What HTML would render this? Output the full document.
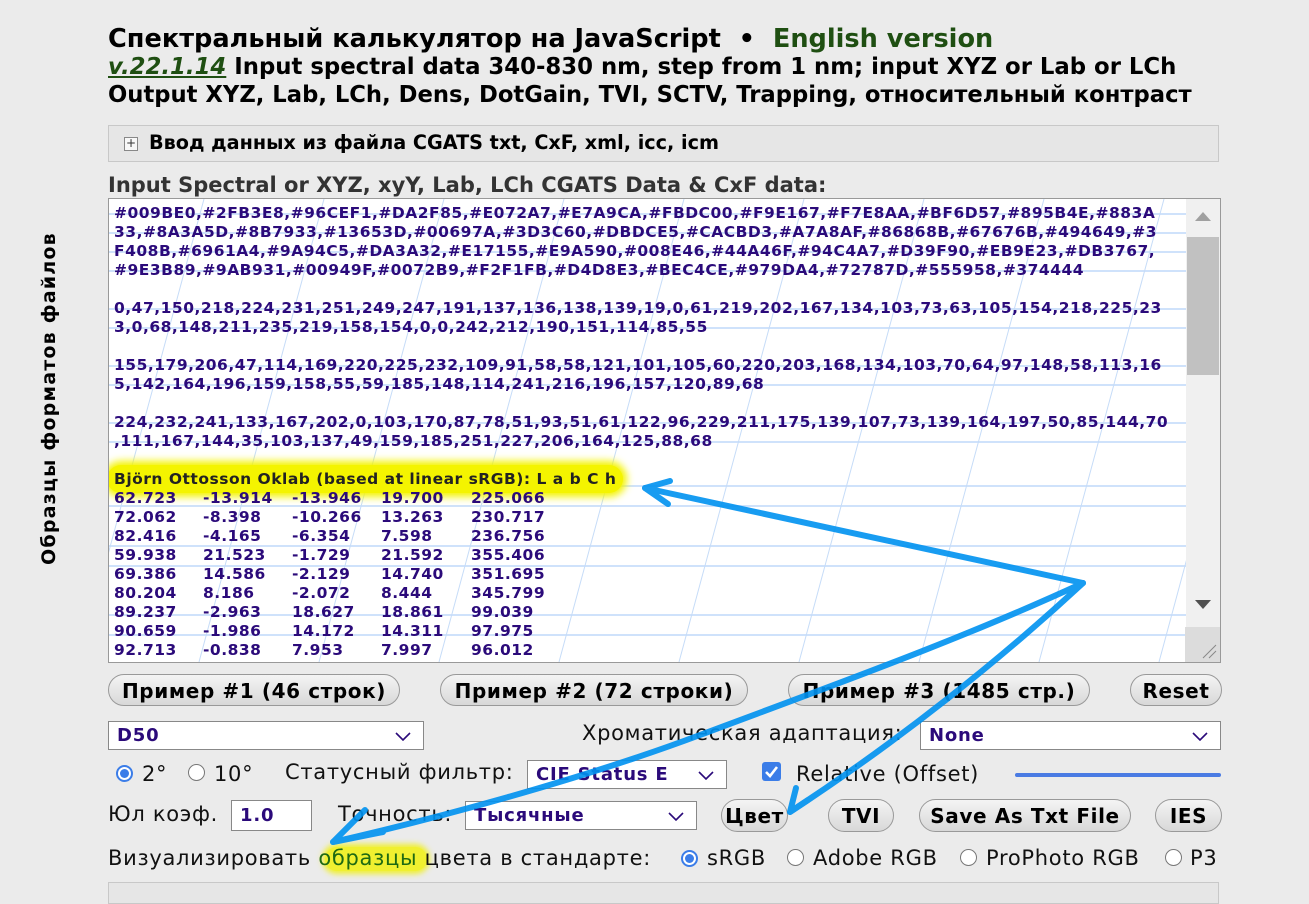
<!DOCTYPE html>
<html><head><meta charset="utf-8">
<style>
html,body{margin:0;padding:0;}
body{width:1309px;height:890px;background:#ebebeb;position:relative;overflow:hidden;font-family:"DejaVu Sans","Liberation Sans",sans-serif;color:#000;}
.a{position:absolute;white-space:nowrap;}
.b{font-weight:bold;}
.ta{position:absolute;left:108px;top:198px;width:1111px;height:463px;background:#fff;border:1px solid #999;overflow:hidden;}
.tl{position:absolute;left:5px;font-size:15.5px;font-weight:bold;color:#2b0a7a;white-space:pre;letter-spacing:0.5px;}
.c{position:absolute;font-size:15.5px;font-weight:bold;color:#2b0a7a;white-space:pre;letter-spacing:0.5px;line-height:19px;}
.btn{position:absolute;height:32px;border:1px solid #999;border-radius:17px;background:linear-gradient(#f4f4f4,#d8d8d8);font-weight:bold;font-size:20px;letter-spacing:0.6px;text-align:center;line-height:32px;box-sizing:border-box;white-space:nowrap;}
.sel{position:absolute;background:#fff;border:1px solid #888;box-sizing:border-box;font-weight:bold;color:#2b0a7a;font-size:18px;letter-spacing:0.8px;padding-left:8px;}
.sel svg{position:absolute;right:12px;top:50%;margin-top:-4px;}
.lbl{position:absolute;font-size:21px;letter-spacing:0.7px;color:#111;white-space:nowrap;}
.rad{position:absolute;width:17px;height:17px;border-radius:50%;border:1px solid #777;background:#fff;box-sizing:border-box;}
.rad.on{border:2px solid #3b7de8;}
.rad.on::after{content:"";position:absolute;left:2px;top:2px;width:9px;height:9px;border-radius:50%;background:#3b7de8;}
</style></head><body>

<div class="a b" style="left:108px;top:24px;font-size:25.6px;">Спектральный калькулятор на JavaScript &nbsp;•&nbsp; <span style="color:#1f4f12">English version</span></div>
<div class="a b" style="left:108px;top:54px;font-size:22.8px;"><span style="color:#1f4f12;font-style:italic;text-decoration:underline">v.22.1.14</span> Input spectral data 340-830 nm, step from 1 nm; input XYZ or Lab or LCh</div>
<div class="a b" style="left:108px;top:82px;font-size:22.7px;">Output XYZ, Lab, LCh, Dens, DotGain, TVI, SCTV, Trapping, относительный контраст</div>

<div class="a" style="left:108px;top:125px;width:1109px;height:35px;border:1px solid #c8c8c8;background:#e6e6e6;"></div>
<div class="a" style="left:124px;top:137px;width:12px;height:12px;border:1px solid #888;background:#f8f8f8;font-size:12px;line-height:11px;text-align:center;color:#333;">+</div>
<div class="a b" style="left:149px;top:131px;font-size:19.2px;">Ввод данных из файла CGATS txt, CxF, xml, icc, icm</div>

<div class="a b" style="left:108px;top:173px;font-size:21px;color:#333;">Input Spectral or XYZ, xyY, Lab, LCh CGATS Data &amp; CxF data:</div>

<div class="a b" style="left:38px;top:565px;font-size:19px;letter-spacing:1.2px;transform:rotate(-90deg);transform-origin:0 0;">Образцы форматов файлов</div>

<div class="ta">
<svg width="1111" height="463" style="position:absolute;left:0;top:0">
<g stroke="#cfe2fb" stroke-width="2">
<line x1="0" y1="15" x2="1078" y2="15"/><line x1="0" y1="34" x2="1078" y2="34"/><line x1="0" y1="53" x2="1078" y2="53"/><line x1="0" y1="72" x2="1078" y2="72"/><line x1="0" y1="110" x2="1078" y2="110"/><line x1="0" y1="129" x2="1078" y2="129"/><line x1="0" y1="167" x2="1078" y2="167"/><line x1="0" y1="186" x2="1078" y2="186"/><line x1="0" y1="224" x2="1078" y2="224"/><line x1="0" y1="243" x2="1078" y2="243"/><line x1="0" y1="287" x2="1078" y2="287"/><line x1="0" y1="307" x2="1078" y2="307"/><line x1="0" y1="347" x2="1078" y2="347"/><line x1="0" y1="367" x2="1078" y2="367"/><line x1="0" y1="416" x2="1078" y2="416"/><line x1="0" y1="436" x2="1078" y2="436"/>
</g>
<g stroke="#c6dcf8" stroke-width="1">
<line x1="95" y1="0" x2="-30" y2="463"/><line x1="215" y1="0" x2="90" y2="463"/><line x1="335" y1="0" x2="210" y2="463"/><line x1="455" y1="0" x2="330" y2="463"/><line x1="575" y1="0" x2="450" y2="463"/><line x1="695" y1="0" x2="570" y2="463"/><line x1="815" y1="0" x2="690" y2="463"/><line x1="935" y1="0" x2="810" y2="463"/><line x1="1055" y1="0" x2="930" y2="463"/><line x1="1175" y1="0" x2="1050" y2="463"/>
</g>
</svg>
<div class="tl" style="top:5px">#009BE0,#2FB3E8,#96CEF1,#DA2F85,#E072A7,#E7A9CA,#FBDC00,#F9E167,#F7E8AA,#BF6D57,#895B4E,#883A</div>
<div class="tl" style="top:24px">33,#8A3A5D,#8B7933,#13653D,#00697A,#3D3C60,#DBDCE5,#CACBD3,#A7A8AF,#86868B,#67676B,#494649,#3</div>
<div class="tl" style="top:43px">F408B,#6961A4,#9A94C5,#DA3A32,#E17155,#E9A590,#008E46,#44A46F,#94C4A7,#D39F90,#EB9E23,#DB3767,</div>
<div class="tl" style="top:62px">#9E3B89,#9AB931,#00949F,#0072B9,#F2F1FB,#D4D8E3,#BEC4CE,#979DA4,#72787D,#555958,#374444</div>
<div class="tl" style="top:100px">0,47,150,218,224,231,251,249,247,191,137,136,138,139,19,0,61,219,202,167,134,103,73,63,105,154,218,225,23</div>
<div class="tl" style="top:119px">3,0,68,148,211,235,219,158,154,0,0,242,212,190,151,114,85,55</div>
<div class="tl" style="top:157px">155,179,206,47,114,169,220,225,232,109,91,58,58,121,101,105,60,220,203,168,134,103,70,64,97,148,58,113,16</div>
<div class="tl" style="top:176px">5,142,164,196,159,158,55,59,185,148,114,241,216,196,157,120,89,68</div>
<div class="tl" style="top:214px">224,232,241,133,167,202,0,103,170,87,78,51,93,51,61,122,96,229,211,175,139,107,73,139,164,197,50,85,144,70</div>
<div class="tl" style="top:233px">,111,167,144,35,103,137,49,159,185,251,227,206,164,125,88,68</div>
<div style="position:absolute;left:-2px;top:266px;width:516px;height:28px;border-radius:14px;background:#f4f400;box-shadow:0 0 8px 4px #f4f400;"></div>
<div class="tl" style="top:271px;color:#222">Björn Ottosson Oklab (based at linear sRGB): L a b C h</div>
<div class="c" style="left:5px;top:290px">62.723<br>72.062<br>82.416<br>59.938<br>69.386<br>80.204<br>89.237<br>90.659<br>92.713</div>
<div class="c" style="left:94px;top:290px">-13.914<br>-8.398<br>-4.165<br>21.523<br>14.586<br>8.186<br>-2.963<br>-1.986<br>-0.838</div>
<div class="c" style="left:183px;top:290px">-13.946<br>-10.266<br>-6.354<br>-1.729<br>-2.129<br>-2.072<br>18.627<br>14.172<br>7.953</div>
<div class="c" style="left:272px;top:290px">19.700<br>13.263<br>7.598<br>21.592<br>14.740<br>8.444<br>18.861<br>14.311<br>7.997</div>
<div class="c" style="left:362px;top:290px">225.066<br>230.717<br>236.756<br>355.406<br>351.695<br>345.799<br>99.039<br>97.975<br>96.012</div>
<div style="position:absolute;left:1077px;top:0;width:34px;height:463px;background:#f0f0f0;"></div>
<div style="position:absolute;left:1078px;top:38px;width:32px;height:138px;background:#c1c1c1;"></div>
<div style="position:absolute;left:1076px;top:428px;width:35px;height:35px;background:#dcdcdc;"></div>
<svg style="position:absolute;left:1085px;top:12px" width="18" height="12"><polygon points="9,1 17,10 1,10" fill="#a0a0a0"/></svg>
<svg style="position:absolute;left:1085px;top:400px" width="18" height="12"><polygon points="1,1 17,1 9,10" fill="#505050"/></svg>
<svg style="position:absolute;left:1092px;top:444px" width="16" height="16"><path d="M2 15L15 2M8 15L15 8" stroke="#888" stroke-width="1"/></svg>
</div>

<div class="btn" style="left:108px;top:674px;width:292px;">Пример #1 (46 строк)</div>
<div class="btn" style="left:440px;top:674px;width:308px;">Пример #2 (72 строки)</div>
<div class="btn" style="left:788px;top:674px;width:302px;">Пример #3 (1485 стр.)</div>
<div class="btn" style="left:1130px;top:674px;width:92px;">Reset</div>

<div class="sel" style="left:108px;top:721px;width:316px;height:29px;line-height:28px;">D50<svg width="16" height="9"><path d="M1 1L8 8L15 1" fill="none" stroke="#2b0a7a" stroke-width="1.6"/></svg></div>
<div class="lbl" style="left:582px;top:721px;">Хроматическая адаптация:</div>
<div class="sel" style="left:920px;top:721px;width:301px;height:29px;line-height:28px;">None<svg width="16" height="9"><path d="M1 1L8 8L15 1" fill="none" stroke="#2b0a7a" stroke-width="1.6"/></svg></div>

<div class="rad on" style="left:116px;top:765px;"></div>
<div class="lbl" style="left:142px;top:762px;">2°</div>
<div class="rad" style="left:188px;top:764px;"></div>
<div class="lbl" style="left:214px;top:762px;">10°</div>
<div class="lbl" style="left:285px;top:760px;">Статусный фильтр:</div>
<div class="sel" style="left:527px;top:760px;width:200px;height:29px;line-height:28px;">CIE Status E<svg width="16" height="9"><path d="M1 1L8 8L15 1" fill="none" stroke="#2b0a7a" stroke-width="1.6"/></svg></div>
<div class="a" style="left:762px;top:762px;width:19px;height:19px;border-radius:3px;background:#3b7de8;"><svg width="19" height="19"><path d="M4 10L8 14L15 5" fill="none" stroke="#fff" stroke-width="2.6"/></svg></div>
<div class="lbl" style="left:796px;top:762px;">Relative (Offset)</div>
<div class="a" style="left:1015px;top:773px;width:206px;height:4px;border-radius:2px;background:#4a7be3;"></div>

<div class="lbl" style="left:108px;top:802px;">Юл коэф.</div>
<div class="sel" style="left:231px;top:800px;width:81px;height:31px;line-height:30px;">1.0</div>
<div class="lbl" style="left:338px;top:802px;">Точность:</div>
<div class="sel" style="left:465px;top:801px;width:232px;height:29px;line-height:28px;">Тысячные<svg width="16" height="9"><path d="M1 1L8 8L15 1" fill="none" stroke="#2b0a7a" stroke-width="1.6"/></svg></div>
<div class="btn" style="left:721px;top:799px;width:67px;height:33px;">Цвет</div>
<div class="btn" style="left:828px;top:799px;width:66px;height:33px;">TVI</div>
<div class="btn" style="left:919px;top:799px;width:212px;height:33px;">Save As Txt File</div>
<div class="btn" style="left:1155px;top:799px;width:67px;height:33px;">IES</div>

<div class="a" style="left:325px;top:847px;width:102px;height:24px;border-radius:12px;background:#f0f030;box-shadow:0 0 6px 3px #f0f030;"></div>
<div class="lbl" style="left:108px;top:846px;">Визуализировать <span style="color:#1f6a12">образцы</span> цвета в стандарте:</div>
<div class="rad on" style="left:681px;top:850px;"></div>
<div class="lbl" style="left:707px;top:846px;">sRGB</div>
<div class="rad" style="left:787px;top:849px;"></div>
<div class="lbl" style="left:813px;top:846px;">Adobe RGB</div>
<div class="rad" style="left:960px;top:849px;"></div>
<div class="lbl" style="left:986px;top:846px;">ProPhoto RGB</div>
<div class="rad" style="left:1165px;top:849px;"></div>
<div class="lbl" style="left:1190px;top:846px;">P3</div>

<div class="a" style="left:108px;top:882px;width:1109px;height:20px;border:1px solid #c8c8c8;background:#e6e6e6;"></div>

<svg class="a" style="left:0;top:0;opacity:0.9" width="1309" height="890">
<g stroke="#0092f0" stroke-width="6" fill="none" stroke-linecap="round" stroke-linejoin="round">
<path d="M1083 583L645 488"/><path d="M670 481L645 488L668 504"/>
<path d="M1083 583C960 640 820 690 700 735C580 780 430 820 333 842"/><path d="M365 810L333 842L383 832"/>
<path d="M1083 583C1000 660 900 740 790 812"/><path d="M796 788L790 812L808 800"/>
</g>
</svg>
</body></html>
